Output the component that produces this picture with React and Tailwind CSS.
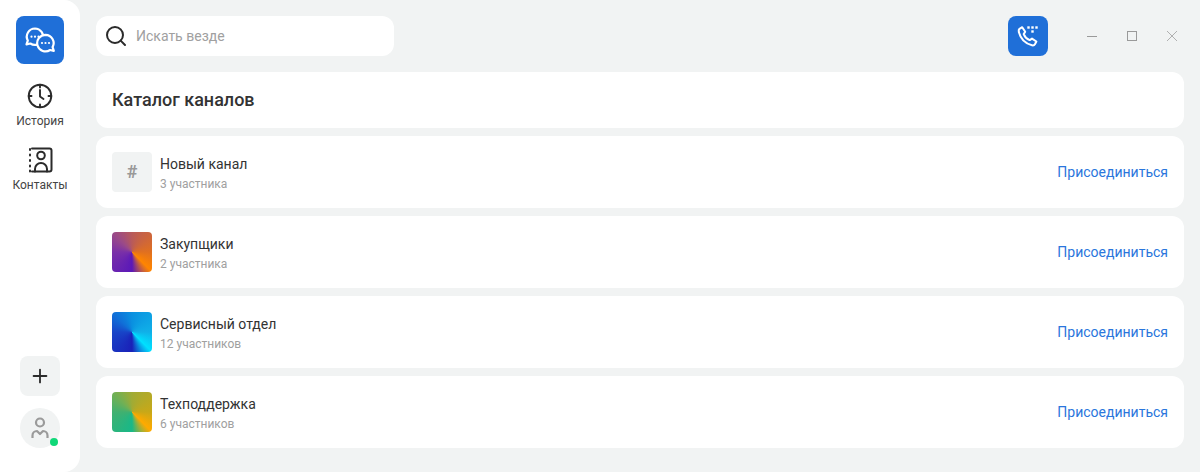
import React from 'react';
import { Plus, Search } from 'lucide-react';

const channels = [
  { name: 'Новый канал', members: '3 участника' },
  { name: 'Закупщики', members: '2 участника', tone: 'bg-[conic-gradient(from_135deg,#ff8500_0deg,#5a18b8_45deg,#7a30a8_135deg,#9a4a88_180deg,#b85a5a_225deg,#e07020_315deg,#ff8500_360deg)]' },
  { name: 'Сервисный отдел', members: '12 участников', tone: 'bg-[conic-gradient(from_135deg,#00e0ff_0deg,#1a20b8_45deg,#1845c8_135deg,#1070d8_180deg,#0a90e0_225deg,#10b0e8_315deg,#00e0ff_360deg)]' },
  { name: 'Техподдержка', members: '6 участников', tone: 'bg-[conic-gradient(from_135deg,#ffaa00_0deg,#18b888_45deg,#40b070_135deg,#70b055_180deg,#a0ab35_225deg,#c8a818_315deg,#ffaa00_360deg)]' },
];

const ChatsIcon = () => (
  <svg width="32" height="32" viewBox="0 0 32 32" fill="none" stroke="white" strokeWidth="2.200" strokeLinejoin="round">
    <path d="M11 4.500a8.200 8.200 0 1 1-4.600 15l-3.900.8 1.300-3.700A8.200 8.200 0 0 1 11 4.500Z" />
    <path d="M21.500 10.800a8.300 8.300 0 1 0 4.600 15.200l3.700.8-1.200-3.700a8.300 8.300 0 0 0-7.100-12.300Z" fill="#1f6fd8" />
    <g fill="white" stroke="none">
      <circle cx="7.500" cy="12.700" r="1.100" /><circle cx="11" cy="12.700" r="1.100" /><circle cx="14.500" cy="12.700" r="1.100" />
      <circle cx="18" cy="19" r="1.100" /><circle cx="21.500" cy="19" r="1.100" /><circle cx="25" cy="19" r="1.100" />
    </g>
  </svg>
);

const HistoryIcon = () => (
  <svg width="26" height="26" viewBox="0 0 26 26" fill="none" stroke="#2b2b2b" strokeWidth="1.900" strokeLinecap="round" strokeLinejoin="round">
    <circle cx="13" cy="13" r="11.300" />
    <path d="M13 1.700v2.800M13 21.500v2.800M1.700 13h2.800M21.500 13h2.800" />
    <path d="M13 7v6.500l3.500 2.500" />
  </svg>
);

const ContactsIcon = () => (
  <svg width="26" height="26" viewBox="0 0 26 26" fill="none" stroke="#2b2b2b" strokeWidth="2" strokeLinecap="round" strokeLinejoin="round">
    <path d="M5 1.500h17.500a2 2 0 0 1 2 2v19a2 2 0 0 1-2 2H5" />
    <circle cx="14" cy="8.500" r="3.800" />
    <path d="M8 24.500v-2.500a6 6 0 0 1 12 0v2.500" />
    <path d="M3 2v1M3 7.500v1M3 13v1M3 18.500v1M3 23.500v1" />
  </svg>
);

const PhoneIcon = () => (
  <svg width="24" height="24" viewBox="0 0 24 24" fill="none" stroke="white" strokeWidth="2" strokeLinejoin="round">
    <path d="M3.500 4.800 6.200 3.200l3 4.600-1.500 2.300c.9 2.400 3.500 5 6 6l2.300-1.500 4.400 2.900-1.500 2.800c-.6 1-1.700 1.300-2.900 1C9.500 19.800 4.500 14.600 2.800 8.100c-.3-1.300 0-2.600.7-3.300Z" />
    <g fill="white" stroke="none">
      <rect x="11.300" y="2.300" width="2.400" height="2.400" /><rect x="15.300" y="2.300" width="2.400" height="2.400" /><rect x="19.300" y="2.300" width="2.400" height="2.400" />
      <rect x="15.300" y="6.300" width="2.400" height="2.400" />
    </g>
  </svg>
);

const UserIcon = () => (
  <svg width="18" height="22" viewBox="0 0 18 22" fill="none" stroke="#9a9a9a" strokeWidth="2.200" strokeLinejoin="round">
    <circle cx="9" cy="5.500" r="4" />
    <path d="M1.500 21v-2.500c0-2.500 2-4.500 4.500-4.500l3 3 3-3c2.500 0 4.500 2 4.500 4.500V21" />
  </svg>
);

export default function App() {
  return (
    <div className="flex h-[472px] w-[1200px] overflow-hidden bg-[#f1f3f3] font-['Roboto',sans-serif] text-[#2b2b2b]">
      {/* sidebar */}
      <aside className="flex w-20 flex-col items-center rounded-r-2xl bg-white pt-4 pb-6">
        <div className="flex h-12 w-12 items-center justify-center rounded-lg bg-[#1f6fd8]">
          <ChatsIcon />
        </div>
        <div className="mt-[19px] flex flex-col items-center">
          <HistoryIcon />
          <span className="mt-1 text-xs leading-4 text-[#444]">История</span>
        </div>
        <div className="mt-[18px] flex flex-col items-center">
          <ContactsIcon />
          <span className="mt-1 text-xs leading-4 text-[#444]">Контакты</span>
        </div>
        <button className="mt-auto flex h-10 w-10 items-center justify-center rounded-lg bg-[#f1f3f3]">
          <Plus size={22} color="#2b2b2b" strokeWidth={2} />
        </button>
        <div className="relative mt-3 flex h-10 w-10 items-center justify-center rounded-full bg-[#f1f3f3]">
          <UserIcon />
          <span className="absolute right-[2px] bottom-[2px] h-2 w-2 rounded-full bg-[#10d878]" />
        </div>
      </aside>

      <main className="flex flex-1 flex-col px-4 pt-4">
        {/* top bar */}
        <header className="flex h-10 items-center">
          <div className="flex h-10 w-[298px] items-center rounded-xl bg-white pl-2">
            <Search size={24} color="#2b2b2b" strokeWidth={2} />
            <span className="ml-2 text-sm text-[#a0a0a0]">Искать везде</span>
          </div>
          <div className="ml-auto flex h-10 w-10 items-center justify-center rounded-lg bg-[#1f6fd8]">
            <PhoneIcon />
          </div>
          <div className="ml-[39px] flex items-center gap-[30px] pr-[7px]">
            <svg width="10" height="10" viewBox="0 0 10 10" stroke="#9a9a9a" strokeWidth="1"><path d="M0 5.500h10" /></svg>
            <svg width="10" height="10" viewBox="0 0 10 10" fill="none" stroke="#9a9a9a" strokeWidth="1"><rect x=".5" y=".5" width="9" height="9" /></svg>
            <svg width="10" height="10" viewBox="0 0 10 10" stroke="#b0b0b0" strokeWidth="1"><path d="M0 0l10 10M10 0 0 10" /></svg>
          </div>
        </header>

        <div className="mt-4 flex h-14 items-center rounded-xl bg-white px-4">
          <h1 className="text-lg font-medium text-[#333]">Каталог каналов</h1>
        </div>

        <div className="mt-2 flex flex-col gap-2">
          {channels.map((c) => (
            <div key={c.name} className="flex h-[72px] items-center rounded-xl bg-white px-4">
              {c.tone ? (
                <div className={`h-10 w-10 rounded ${c.tone}`} />
              ) : (
                <div className="flex h-10 w-10 items-center justify-center rounded bg-[#f1f3f3] text-lg font-bold text-[#999]">#</div>
              )}
              <div className="ml-2 flex flex-col pt-[2px]">
                <span className="text-sm leading-5 text-[#333]">{c.name}</span>
                <span className="mt-[2px] text-xs leading-4 text-[#a0a0a0]">{c.members}</span>
              </div>
              <a className="ml-auto text-sm text-[#2a76dc]">Присоединиться</a>
            </div>
          ))}
        </div>
      </main>
    </div>
  );
}
